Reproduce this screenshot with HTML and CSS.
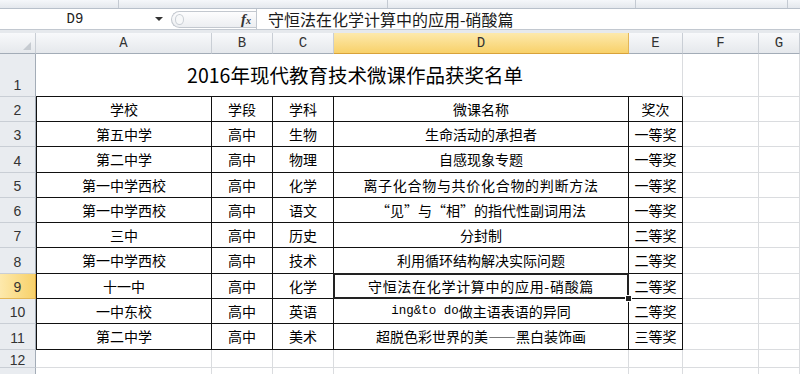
FILE: index.html
```html
<!DOCTYPE html>
<html lang="zh-CN">
<head>
    <meta charset="UTF-8">
    <title>2016年现代教育技术微课作品获奖名单</title>
    <link rel="stylesheet" href="styles.css">
</head>
<body>
    <!-- Ribbon bottom edge -->
    <div class="ribbon-edge">
        <div class="ribbon-group g1"></div>
        <div class="ribbon-group g2"></div>
        <div class="ribbon-group g3"></div>
        <div class="ribbon-group g4"></div>
    </div>

    <!-- Formula bar -->
    <div class="formula-bar">
        <div class="name-box">
            <span class="name-text">D9</span>
            <span class="dropdown"><span class="arrow"></span></span>
        </div>
        <div class="pill">
            <span class="pill-knob"></span>
            <span class="fx">f<span class="fx-x">x</span></span>
        </div>
        <div class="formula-input">守恒法在化学计算中的应用-硝酸篇</div>
    </div>
    <div class="bar-gap"></div>

    <!-- Sheet -->
    <div class="sheet">
        <div class="ch corner"></div>
        <div class="ch">A</div>
        <div class="ch">B</div>
        <div class="ch">C</div>
        <div class="ch active">D</div>
        <div class="ch">E</div>
        <div class="ch">F</div>
        <div class="ch">G</div>

        <div class="rh first-row">1</div>
        <div class="c title">2016年现代教育技术微课作品获奖名单</div>
        <div class="c"></div>
        <div class="c"></div>

        <div class="rh">2</div>
        <div class="c t first">学校</div>
        <div class="c t">学段</div>
        <div class="c t">学科</div>
        <div class="c t">微课名称</div>
        <div class="c t">奖次</div>
        <div class="c"></div>
        <div class="c"></div>

        <div class="rh">3</div>
        <div class="c t first">第五中学</div>
        <div class="c t">高中</div>
        <div class="c t">生物</div>
        <div class="c t">生命活动的承担者</div>
        <div class="c t">一等奖</div>
        <div class="c"></div>
        <div class="c"></div>

        <div class="rh">4</div>
        <div class="c t first">第二中学</div>
        <div class="c t">高中</div>
        <div class="c t">物理</div>
        <div class="c t">自感现象专题</div>
        <div class="c t">一等奖</div>
        <div class="c"></div>
        <div class="c"></div>

        <div class="rh">5</div>
        <div class="c t first">第一中学西校</div>
        <div class="c t">高中</div>
        <div class="c t">化学</div>
        <div class="c t spaced">离子化合物与共价化合物的判断方法</div>
        <div class="c t">一等奖</div>
        <div class="c"></div>
        <div class="c"></div>

        <div class="rh">6</div>
        <div class="c t first">第一中学西校</div>
        <div class="c t">高中</div>
        <div class="c t">语文</div>
        <div class="c t">“见”与“相”的指代性副词用法</div>
        <div class="c t">一等奖</div>
        <div class="c"></div>
        <div class="c"></div>

        <div class="rh">7</div>
        <div class="c t first">三中</div>
        <div class="c t">高中</div>
        <div class="c t">历史</div>
        <div class="c t">分封制</div>
        <div class="c t">二等奖</div>
        <div class="c"></div>
        <div class="c"></div>

        <div class="rh">8</div>
        <div class="c t first">第一中学西校</div>
        <div class="c t">高中</div>
        <div class="c t">技术</div>
        <div class="c t">利用循环结构解决实际问题</div>
        <div class="c t">二等奖</div>
        <div class="c"></div>
        <div class="c"></div>

        <div class="rh active">9</div>
        <div class="c t first">十一中</div>
        <div class="c t">高中</div>
        <div class="c t">化学</div>
        <div class="c t selected spaced">
            守恒法在化学计算中的应用-硝酸篇
            <span class="selection"><span class="fill-handle"></span></span>
        </div>
        <div class="c t">二等奖</div>
        <div class="c"></div>
        <div class="c"></div>

        <div class="rh">10</div>
        <div class="c t first">一中东校</div>
        <div class="c t">高中</div>
        <div class="c t">英语</div>
        <div class="c t"><span class="latin">ing&amp;to do</span>做主语表语的异同</div>
        <div class="c t">二等奖</div>
        <div class="c"></div>
        <div class="c"></div>

        <div class="rh">11</div>
        <div class="c t first">第二中学</div>
        <div class="c t">高中</div>
        <div class="c t">美术</div>
        <div class="c t">超脱色彩世界的美——黑白装饰画</div>
        <div class="c t">三等奖</div>
        <div class="c"></div>
        <div class="c"></div>

        <div class="rh">12</div>
        <div class="c"></div>
        <div class="c"></div>
        <div class="c"></div>
        <div class="c"></div>
        <div class="c"></div>
        <div class="c"></div>
        <div class="c"></div>

        <div class="rh"></div>
        <div class="c"></div>
        <div class="c"></div>
        <div class="c"></div>
        <div class="c"></div>
        <div class="c"></div>
        <div class="c"></div>
        <div class="c"></div>
    </div>
</body>
</html>
```

FILE: styles.css
```css
/* Reset and base styles */
* {
    margin: 0;
    padding: 0;
    box-sizing: border-box;
}

body {
    width: 800px;
    height: 374px;
    overflow: hidden;
    background: #fff;
    font-family: "Noto Sans CJK SC", sans-serif;
    color: #000;
}

/* Ribbon edge */
.ribbon-edge {
    display: flex;
    height: 9px;
    background: linear-gradient(#f5f7fa, #e4e8ed);
    border-bottom: 1px solid #b8c0ca;
}

.ribbon-group {
    border-right: 1px solid #c4cad2;
}

.g1 { width: 119px; }
.g2 { width: 269px; }
.g3 { width: 248px; }
.g4 { width: 152px; }

/* Formula bar */
.formula-bar {
    display: flex;
    align-items: center;
    height: 21px;
    background: #fff;
    border-bottom: 1px solid #c2c8d0;
}

.name-box {
    display: flex;
    align-items: center;
    width: 168px;
    height: 100%;
}

.name-text {
    flex: 1;
    text-align: center;
    font-family: "Liberation Mono", monospace;
    font-size: 14px;
    color: #222;
}

.dropdown {
    width: 18px;
    display: flex;
    justify-content: center;
}

.arrow {
    width: 0;
    height: 0;
    border-left: 4px solid transparent;
    border-right: 4px solid transparent;
    border-top: 4px solid #333;
}

.pill {
    display: flex;
    align-items: center;
    justify-content: space-between;
    width: 85px;
    height: 17px;
    margin-left: 3px;
    padding: 0 5px 0 3px;
    border: 1px solid #c3c8cf;
    border-right: none;
    border-radius: 9px 0 0 9px;
    background: linear-gradient(#fdfdfe, #eceef1);
}

.pill-knob {
    width: 9px;
    height: 11px;
    border: 1px solid #c9ced4;
    border-radius: 50%;
    background: #f7f8f9;
}

.fx {
    font-family: "Liberation Serif", serif;
    font-style: italic;
    font-weight: bold;
    font-size: 15px;
    color: #333;
}

.fx-x {
    font-size: 10px;
}

.formula-input {
    flex: 1;
    height: 100%;
    border-left: 1px solid #c2c8d0;
    padding-left: 11px;
    font-size: 16px;
    line-height: 20px;
    color: #1a1a1a;
    white-space: nowrap;
}

.bar-gap {
    height: 3px;
    background: #e6e9ed;
}

/* Sheet grid */
.sheet {
    display: grid;
    grid-template-columns: 36px 176px 61px 61px 295px 54px 76px 41px;
    grid-template-rows: 21px 43px 25px 25px 26px 25px 25px 25px 26px 25px 25px 26px 18px 7px;
    overflow: hidden;
}

.ch {
    display: flex;
    align-items: center;
    justify-content: center;
    background: linear-gradient(#f8f9fb, #e5e8ec);
    border-right: 1px solid #c9ced5;
    border-bottom: 1px solid #a3acb7;
    font-family: "Liberation Mono", monospace;
    font-size: 14px;
    color: #333;
}

.ch.active {
    background: linear-gradient(#fde9ac, #f8d16a);
    border-right-color: #e3b657;
    border-bottom-color: #d8a23a;
}

.corner {
    position: relative;
}

.corner::after {
    content: "";
    position: absolute;
    right: 4px;
    bottom: 3px;
    border-left: 8px solid transparent;
    border-bottom: 8px solid #c6cbd1;
}

.rh {
    display: flex;
    align-items: center;
    justify-content: center;
    padding-top: 2px;
    background: #e9ecf0;
    border-right: 1px solid #a3acb7;
    border-bottom: 1px solid #c9ced5;
    font-family: "Liberation Sans", sans-serif;
    font-size: 14px;
    color: #333;
}

.rh.first-row {
    align-items: flex-end;
    padding-bottom: 3px;
}

.rh.active {
    background: linear-gradient(90deg, #fde9ac, #f8d16a);
    border-right-color: #d8a23a;
    border-bottom-color: #e3b657;
}

/* Cells */
.c {
    display: flex;
    align-items: center;
    justify-content: center;
    border-right: 1px solid #dadcdf;
    border-bottom: 1px solid #dadcdf;
    font-size: 14px;
    line-height: 1.2;
    white-space: nowrap;
}

.c.t {
    border-right-color: #111;
    border-bottom-color: #111;
}

.c.t.first {
    border-left: 1px solid #111;
}

.c.title {
    grid-column: span 5;
    border-bottom-color: #111;
    font-size: 19.5px;
    padding-right: 8px;
}

.spaced {
    letter-spacing: 0.7px;
}

.latin {
    font-family: "Liberation Mono", monospace;
    font-size: 12.5px;
}

/* Selected cell */
.selected {
    position: relative;
}

.selection {
    position: absolute;
    left: -1px;
    top: -1px;
    right: -1px;
    bottom: -1px;
    border: 2px solid #222;
}

.fill-handle {
    position: absolute;
    right: -5px;
    bottom: -5px;
    width: 7px;
    height: 7px;
    background: #222;
    border: 1px solid #fff;
}
```
